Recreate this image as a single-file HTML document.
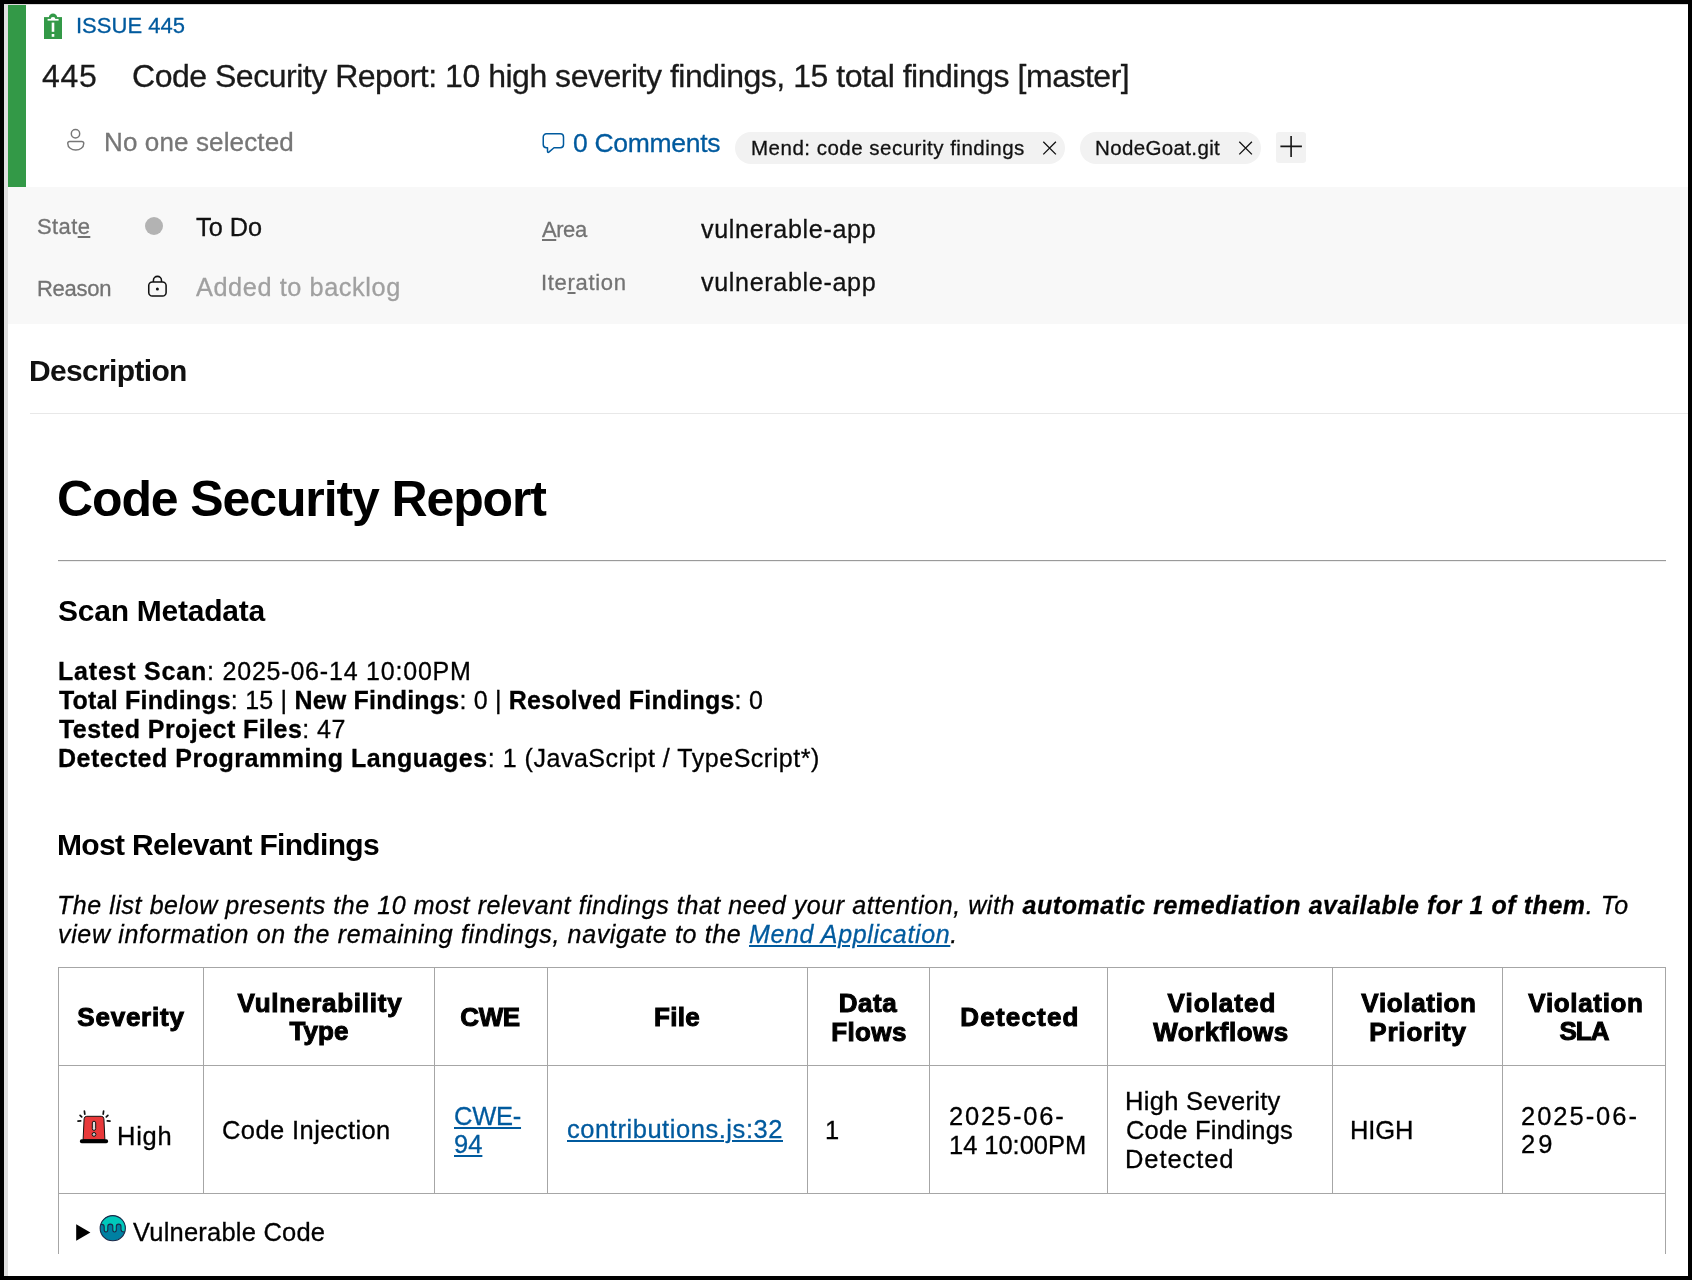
<!DOCTYPE html>
<html><head><meta charset="utf-8"><style>
html,body{margin:0;padding:0;}
body{width:1692px;height:1280px;position:relative;overflow:hidden;background:#fff;font-family:"Liberation Sans",sans-serif;}
.t{position:absolute;white-space:nowrap;will-change:transform;-webkit-text-stroke:0.3px currentColor;}
u{text-decoration-thickness:1.5px;text-underline-offset:2px;}
</style></head><body>
<div style="position:absolute;left:0px;top:0px;width:1692px;height:1280px;background:#000;"></div>
<div style="position:absolute;left:4px;top:4px;width:1684px;height:1272px;background:#fff;"></div>
<div style="position:absolute;left:4px;top:4px;width:4px;height:1272px;background:#e0e0e0;"></div>
<div style="position:absolute;left:4px;top:4px;width:1684px;height:1px;background:#dadada;"></div>
<div style="position:absolute;left:8px;top:5px;width:18px;height:182px;background:#339947;"></div>
<div style="position:absolute;left:8px;top:187px;width:1680px;height:137px;background:#f8f8f8;"></div>
<div style="position:absolute;left:30px;top:413px;width:1658px;height:1px;background:#e8e8e8;"></div>
<div style="position:absolute;left:58px;top:560px;width:1608px;height:1px;background:#9a9a9a;"></div>
<div style="position:absolute;left:58px;top:561px;width:1608px;height:1px;background:#efefef;"></div>
<svg style="position:absolute;left:44px;top:13px" width="18" height="27" viewBox="0 0 18 27">
<rect x="0" y="4.1" width="18" height="21.9" fill="#339947"/>
<circle cx="9" cy="4.7" r="4.2" fill="#339947"/>
<path d="M6.6 6.4 A2.4 2.4 0 0 1 11.4 6.4 Z" fill="#fff"/>
<rect x="3.6" y="5.9" width="11" height="1.7" fill="#fff"/>
<rect x="7.7" y="9.6" width="2.6" height="9.2" fill="#fff"/>
<rect x="7.7" y="21" width="2.6" height="2.8" fill="#fff"/>
</svg>
<div class="t" id="issue" style="left:75.84px;top:15.13px;font-size:22.00px;line-height:22.00px;font-weight:400;font-style:normal;color:#005a9e;letter-spacing:0.012px;">ISSUE 445</div>
<div class="t" id="num" style="left:41.64px;top:59.91px;font-size:32.00px;line-height:32.00px;font-weight:400;font-style:normal;color:#1a1a1a;letter-spacing:0.720px;">445</div>
<div class="t" id="title" style="left:132.46px;top:59.91px;font-size:32.00px;line-height:32.00px;font-weight:400;font-style:normal;color:#1a1a1a;letter-spacing:-0.482px;">Code Security Report: 10 high severity findings, 15 total findings [master]</div>
<svg style="position:absolute;left:62px;top:126px" width="28" height="30" viewBox="0 0 28 30">
<circle cx="13.5" cy="7.75" r="4.2" fill="none" stroke="#777" stroke-width="1.45"/>
<path d="M7.75 15.5 H19.75 Q21.75 15.5 21.75 17.5 C21.75 21.6 18 24 13.75 24 C9.5 24 5.75 21.6 5.75 17.5 Q5.75 15.5 7.75 15.5 Z" fill="none" stroke="#777" stroke-width="1.45"/>
</svg>
<div class="t" id="noone" style="left:104.20px;top:128.99px;font-size:26.00px;line-height:26.00px;font-weight:400;font-style:normal;color:#767676;letter-spacing:0.129px;">No one selected</div>
<svg style="position:absolute;left:540px;top:131px" width="27" height="25" viewBox="0 0 27 25">
<path d="M6.45 2.75 H20.3 A3.2 3.2 0 0 1 23.5 5.95 V13.55 A3.2 3.2 0 0 1 20.3 16.75 H14 L9.2 20.9 Q7.5 22.2 7.5 20.3 V16.75 H6.45 A3.2 3.2 0 0 1 3.25 13.55 V5.95 A3.2 3.2 0 0 1 6.45 2.75 Z" fill="none" stroke="#005a9e" stroke-width="1.5" stroke-linejoin="round"/>
</svg>
<div class="t" id="comments" style="left:573.42px;top:129.57px;font-size:26.50px;line-height:26.50px;font-weight:400;font-style:normal;color:#005a9e;letter-spacing:-0.300px;">0 Comments</div>
<div style="position:absolute;left:735px;top:132px;width:330px;height:32px;background:#f2f2f2;border-radius:16px"></div>
<div class="t" id="pill1" style="left:751.01px;top:137.65px;font-size:20.50px;line-height:20.50px;font-weight:400;font-style:normal;color:#111;letter-spacing:0.500px;">Mend: code security findings</div>
<svg style="position:absolute;left:1041px;top:141px" width="16" height="16" viewBox="0 0 16 16"><path d="M2.3 0.8 L14.9 13.4 M14.9 0.8 L2.3 13.4" stroke="#111" stroke-width="1.3"/></svg>
<div style="position:absolute;left:1080px;top:132px;width:181px;height:32px;background:#f2f2f2;border-radius:16px"></div>
<div class="t" id="pill2" style="left:1095.01px;top:137.65px;font-size:20.50px;line-height:20.50px;font-weight:400;font-style:normal;color:#111;letter-spacing:0.360px;">NodeGoat.git</div>
<svg style="position:absolute;left:1237px;top:141px" width="16" height="16" viewBox="0 0 16 16"><path d="M2.3 0.8 L14.9 13.4 M14.9 0.8 L2.3 13.4" stroke="#111" stroke-width="1.3"/></svg>
<div style="position:absolute;left:1276px;top:132px;width:30px;height:31px;background:#f2f2f2;border-radius:3px"></div>
<svg style="position:absolute;left:1279px;top:135px" width="24" height="24" viewBox="0 0 24 24"><path d="M1.4 11.4 H22.9 M12.1 0.9 V21.9" stroke="#161616" stroke-width="1.6"/></svg>
<div class="t" id="state" style="left:37.01px;top:216.38px;font-size:22.00px;line-height:22.00px;font-weight:400;font-style:normal;color:#737373;letter-spacing:0.385px;">Stat<u>e</u></div>
<div style="position:absolute;left:145px;top:217px;width:18px;height:18px;border-radius:50%;background:#b3b3b3"></div>
<div class="t" id="todo" style="left:195.55px;top:214.58px;font-size:25.30px;line-height:25.30px;font-weight:400;font-style:normal;color:#111;letter-spacing:0.000px;">To Do</div>
<div class="t" id="reason" style="left:37.10px;top:278.38px;font-size:22.00px;line-height:22.00px;font-weight:400;font-style:normal;color:#737373;letter-spacing:-0.270px;">Reason</div>
<svg style="position:absolute;left:146px;top:274px" width="23" height="24" viewBox="0 0 23 24">
<path d="M7.4 8 V6.4 A4.05 4.05 0 0 1 15.5 6.4 V8" fill="none" stroke="#111" stroke-width="1.55"/>
<rect x="2.75" y="8" width="17.35" height="14" rx="3.6" fill="none" stroke="#111" stroke-width="1.55"/>
<circle cx="11.4" cy="14.9" r="1.5" fill="#111"/>
</svg>
<div class="t" id="backlog" style="left:195.91px;top:274.98px;font-size:25.30px;line-height:25.30px;font-weight:400;font-style:normal;color:#a0a0a0;letter-spacing:0.580px;">Added to backlog</div>
<div class="t" id="area" style="left:541.64px;top:219.38px;font-size:22.00px;line-height:22.00px;font-weight:400;font-style:normal;color:#737373;letter-spacing:-0.450px;"><u>A</u>rea</div>
<div class="t" id="areav" style="left:700.75px;top:217.25px;font-size:25.10px;line-height:25.10px;font-weight:400;font-style:normal;color:#111;letter-spacing:0.664px;">vulnerable-app</div>
<div class="t" id="iter" style="left:541.11px;top:271.68px;font-size:22.00px;line-height:22.00px;font-weight:400;font-style:normal;color:#737373;letter-spacing:0.687px;">Ite<u>r</u>ation</div>
<div class="t" id="iterv" style="left:700.75px;top:270.45px;font-size:25.10px;line-height:25.10px;font-weight:400;font-style:normal;color:#111;letter-spacing:0.664px;">vulnerable-app</div>
<div class="t" id="desc" style="left:29.00px;top:355.61px;font-size:30.00px;line-height:30.00px;font-weight:700;font-style:normal;color:#111;letter-spacing:-0.666px;-webkit-text-stroke:0;">Description</div>
<div class="t" id="h1" style="left:57.20px;top:474.28px;font-size:50.00px;line-height:50.00px;font-weight:700;font-style:normal;color:#000;letter-spacing:-1.115px;-webkit-text-stroke:0;">Code Security Report</div>
<div class="t" id="h2a" style="left:57.74px;top:595.90px;font-size:30.00px;line-height:30.00px;font-weight:700;font-style:normal;color:#000;letter-spacing:-0.238px;-webkit-text-stroke:0;">Scan Metadata</div>
<div class="t" id="m1" style="left:58.14px;top:658.84px;font-size:25.00px;line-height:25.00px;font-weight:400;font-style:normal;color:#000;letter-spacing:0.792px;"><b>Latest Scan</b>: 2025-06-14 10:00PM</div>
<div class="t" id="m2" style="left:59.10px;top:687.84px;font-size:25.00px;line-height:25.00px;font-weight:400;font-style:normal;color:#000;letter-spacing:0.207px;"><b>Total Findings</b>: 15 | <b>New Findings</b>: 0 | <b>Resolved Findings</b>: 0</div>
<div class="t" id="m3" style="left:59.04px;top:716.84px;font-size:25.00px;line-height:25.00px;font-weight:400;font-style:normal;color:#000;letter-spacing:0.446px;"><b>Tested Project Files</b>: 47</div>
<div class="t" id="m4" style="left:58.14px;top:745.84px;font-size:25.00px;line-height:25.00px;font-weight:400;font-style:normal;color:#000;letter-spacing:0.525px;"><b>Detected Programming Languages</b>: 1 (JavaScript / TypeScript*)</div>
<div class="t" id="h2b" style="left:57.29px;top:829.81px;font-size:30.00px;line-height:30.00px;font-weight:700;font-style:normal;color:#000;letter-spacing:-0.667px;-webkit-text-stroke:0;">Most Relevant Findings</div>
<div class="t" id="p1" style="left:57.20px;top:892.94px;font-size:25.00px;line-height:25.00px;font-weight:400;font-style:italic;color:#000;letter-spacing:0.568px;">The list below presents the 10 most relevant findings that need your attention, with <b>automatic remediation available for 1 of them</b>. To</div>
<div class="t" id="p2" style="left:58.10px;top:921.84px;font-size:25.00px;line-height:25.00px;font-weight:400;font-style:italic;color:#000;letter-spacing:0.654px;">view information on the remaining findings, navigate to the <u style="color:#005a9e">Mend Application</u>.</div>
<div style="position:absolute;left:58px;top:967px;width:1px;height:287px;background:#a6a6a6;"></div>
<div style="position:absolute;left:203px;top:967px;width:1px;height:227px;background:#a6a6a6;"></div>
<div style="position:absolute;left:434px;top:967px;width:1px;height:227px;background:#a6a6a6;"></div>
<div style="position:absolute;left:547px;top:967px;width:1px;height:227px;background:#a6a6a6;"></div>
<div style="position:absolute;left:807px;top:967px;width:1px;height:227px;background:#a6a6a6;"></div>
<div style="position:absolute;left:929px;top:967px;width:1px;height:227px;background:#a6a6a6;"></div>
<div style="position:absolute;left:1107px;top:967px;width:1px;height:227px;background:#a6a6a6;"></div>
<div style="position:absolute;left:1332px;top:967px;width:1px;height:227px;background:#a6a6a6;"></div>
<div style="position:absolute;left:1502px;top:967px;width:1px;height:227px;background:#a6a6a6;"></div>
<div style="position:absolute;left:1665px;top:967px;width:1px;height:287px;background:#a6a6a6;"></div>
<div style="position:absolute;left:58px;top:967px;width:1608px;height:1px;background:#a6a6a6;"></div>
<div style="position:absolute;left:58px;top:1065px;width:1608px;height:1px;background:#a6a6a6;"></div>
<div style="position:absolute;left:58px;top:1193px;width:1608px;height:1px;background:#a6a6a6;"></div>
<div class="t" id="hsev" style="left:-168.64px;top:1003.99px;font-size:26.00px;line-height:26.00px;font-weight:700;font-style:normal;color:#000;letter-spacing:0.772px;width:600px;text-align:center;-webkit-text-stroke:1.0px #000;">Severity</div>
<div class="t" id="hvt1" style="left:19.54px;top:989.99px;font-size:26.00px;line-height:26.00px;font-weight:700;font-style:normal;color:#000;letter-spacing:0.750px;width:600px;text-align:center;-webkit-text-stroke:1.0px #000;">Vulnerability</div>
<div class="t" id="hvt2" style="left:19.00px;top:1018.49px;font-size:26.00px;line-height:26.00px;font-weight:700;font-style:normal;color:#000;letter-spacing:0.000px;width:600px;text-align:center;-webkit-text-stroke:1.0px #000;">Type</div>
<div class="t" id="hcwe" style="left:190.20px;top:1003.99px;font-size:26.00px;line-height:26.00px;font-weight:700;font-style:normal;color:#000;letter-spacing:-0.450px;width:600px;text-align:center;-webkit-text-stroke:1.0px #000;">CWE</div>
<div class="t" id="hfile" style="left:377.30px;top:1003.99px;font-size:26.00px;line-height:26.00px;font-weight:700;font-style:normal;color:#000;letter-spacing:0.267px;width:600px;text-align:center;-webkit-text-stroke:1.0px #000;">File</div>
<div class="t" id="hdf1" style="left:567.50px;top:989.99px;font-size:26.00px;line-height:26.00px;font-weight:700;font-style:normal;color:#000;letter-spacing:0.560px;width:600px;text-align:center;-webkit-text-stroke:1.0px #000;">Data</div>
<div class="t" id="hdf2" style="left:569.04px;top:1019.49px;font-size:26.00px;line-height:26.00px;font-weight:700;font-style:normal;color:#000;letter-spacing:0.360px;width:600px;text-align:center;-webkit-text-stroke:1.0px #000;">Flows</div>
<div class="t" id="hdet" style="left:720.30px;top:1003.99px;font-size:26.00px;line-height:26.00px;font-weight:700;font-style:normal;color:#000;letter-spacing:1.195px;width:600px;text-align:center;-webkit-text-stroke:1.0px #000;">Detected</div>
<div class="t" id="hvw1" style="left:921.80px;top:989.99px;font-size:26.00px;line-height:26.00px;font-weight:700;font-style:normal;color:#000;letter-spacing:1.014px;width:600px;text-align:center;-webkit-text-stroke:1.0px #000;">Violated</div>
<div class="t" id="hvw2" style="left:921.41px;top:1019.49px;font-size:26.00px;line-height:26.00px;font-weight:700;font-style:normal;color:#000;letter-spacing:0.513px;width:600px;text-align:center;-webkit-text-stroke:1.0px #000;">Workflows</div>
<div class="t" id="hvp1" style="left:1119.40px;top:989.99px;font-size:26.00px;line-height:26.00px;font-weight:700;font-style:normal;color:#000;letter-spacing:0.663px;width:600px;text-align:center;-webkit-text-stroke:1.0px #000;">Violation</div>
<div class="t" id="hvp2" style="left:1117.50px;top:1019.49px;font-size:26.00px;line-height:26.00px;font-weight:700;font-style:normal;color:#000;letter-spacing:0.793px;width:600px;text-align:center;-webkit-text-stroke:1.0px #000;">Priority</div>
<div class="t" id="hvs1" style="left:1285.66px;top:989.99px;font-size:26.00px;line-height:26.00px;font-weight:700;font-style:normal;color:#000;letter-spacing:0.664px;width:600px;text-align:center;-webkit-text-stroke:1.0px #000;">Violation</div>
<div class="t" id="hvs2" style="left:1283.91px;top:1018.49px;font-size:26.00px;line-height:26.00px;font-weight:700;font-style:normal;color:#000;letter-spacing:-0.990px;width:600px;text-align:center;-webkit-text-stroke:1.0px #000;">SLA</div>
<svg style="position:absolute;left:74px;top:1106px" width="40" height="40" viewBox="0 0 40 40">
<g stroke="#111" stroke-width="1.7" stroke-linecap="round">
<path d="M10.4 5 L10.8 8.2"/><path d="M29.6 5 L29.2 8.2"/>
<path d="M6.1 9.3 L7.7 10.8"/><path d="M33.9 9.3 L32.3 10.8"/>
<path d="M4 15.2 L6.7 14.8"/><path d="M36 15.2 L33.3 14.8"/>
</g>
<path d="M12.8 10.3 H27.2 Q29.7 10.3 29.9 12.8 L30.9 33.8 H9.1 L10.1 12.8 Q10.3 10.3 12.8 10.3 Z" fill="#e8393a" stroke="#111" stroke-width="1"/>
<rect x="5.9" y="33.2" width="28.2" height="4" rx="1.8" fill="#000"/>
<rect x="18.3" y="15.2" width="3.4" height="9.2" rx="1.7" fill="#ddd" stroke="#111" stroke-width="1"/>
<circle cx="20" cy="28.4" r="1.9" fill="#ccc" stroke="#111" stroke-width="1"/>
</svg>
<div class="t" id="high" style="left:117.20px;top:1124.41px;font-size:25.50px;line-height:25.50px;font-weight:400;font-style:normal;color:#000;letter-spacing:0.750px;">High</div>
<div class="t" id="ci" style="left:222.01px;top:1118.01px;font-size:25.50px;line-height:25.50px;font-weight:400;font-style:normal;color:#000;letter-spacing:0.406px;">Code Injection</div>
<div class="t" id="cwe1" style="left:453.64px;top:1103.51px;font-size:25.50px;line-height:25.50px;font-weight:400;font-style:normal;color:#005a9e;letter-spacing:-0.240px;"><u>CWE-</u></div>
<div class="t" id="cwe2" style="left:453.64px;top:1131.81px;font-size:25.50px;line-height:25.50px;font-weight:400;font-style:normal;color:#005a9e;letter-spacing:0.000px;"><u>94</u></div>
<div class="t" id="file" style="left:566.70px;top:1117.31px;font-size:25.50px;line-height:25.50px;font-weight:400;font-style:normal;color:#005a9e;letter-spacing:0.550px;"><u>contributions.js:32</u></div>
<div class="t" id="df" style="left:825.19px;top:1118.31px;font-size:25.50px;line-height:25.50px;font-weight:400;font-style:normal;color:#000;letter-spacing:0.000px;">1</div>
<div class="t" id="det1" style="left:949.01px;top:1103.71px;font-size:25.50px;line-height:25.50px;font-weight:400;font-style:normal;color:#000;letter-spacing:1.800px;">2025-06-</div>
<div class="t" id="det2" style="left:949.01px;top:1133.01px;font-size:25.50px;line-height:25.50px;font-weight:400;font-style:normal;color:#000;letter-spacing:-0.040px;">14 10:00PM</div>
<div class="t" id="vw1" style="left:1125.00px;top:1089.21px;font-size:25.50px;line-height:25.50px;font-weight:400;font-style:normal;color:#000;letter-spacing:0.309px;">High Severity</div>
<div class="t" id="vw2" style="left:1126.46px;top:1118.31px;font-size:25.50px;line-height:25.50px;font-weight:400;font-style:normal;color:#000;letter-spacing:0.195px;">Code Findings</div>
<div class="t" id="vw3" style="left:1125.00px;top:1147.11px;font-size:25.50px;line-height:25.50px;font-weight:400;font-style:normal;color:#000;letter-spacing:0.915px;">Detected</div>
<div class="t" id="vp" style="left:1350.29px;top:1118.41px;font-size:25.50px;line-height:25.50px;font-weight:400;font-style:normal;color:#000;letter-spacing:-0.100px;">HIGH</div>
<div class="t" id="sla1" style="left:1520.83px;top:1104.11px;font-size:25.50px;line-height:25.50px;font-weight:400;font-style:normal;color:#000;letter-spacing:1.980px;">2025-06-</div>
<div class="t" id="sla2" style="left:1520.83px;top:1132.21px;font-size:25.50px;line-height:25.50px;font-weight:400;font-style:normal;color:#000;letter-spacing:2.970px;">29</div>
<svg style="position:absolute;left:75px;top:1222px" width="18" height="20" viewBox="0 0 18 20"><path d="M1.2 2.2 L15.4 10.5 L1.2 18.8 Z" fill="#000"/></svg>
<svg style="position:absolute;left:95px;top:1210.5px" width="35" height="35" viewBox="0 0 35 35">
<defs><clipPath id="cc"><circle cx="17.75" cy="17.2" r="12.6"/></clipPath></defs>
<circle cx="17.75" cy="17.2" r="12.6" fill="#0080a2"/>
<path clip-path="url(#cc)" d="M0 0 H35 V21 H29.2 Q26 21 26 18.6 V15.4 Q26 13.1 23.65 13.1 Q21.3 13.1 21.3 15.4 V18.8 Q21.3 21 19.55 21 Q17.8 21 17.8 18.8 V15.4 Q17.8 13.1 15.3 13.1 Q12.8 13.1 12.8 15.4 V18.8 Q12.8 21 11 21 Q9.2 21 9.2 18.8 V15.9 Q9.2 13.4 6.8 13.4 H0 Z" fill="#00c8bb" stroke="#1c2848" stroke-width="1.1"/>
<circle cx="17.75" cy="17.2" r="12.6" fill="none" stroke="#1c2848" stroke-width="1.1"/>
</svg>
<div class="t" id="vc" style="left:133.10px;top:1220.21px;font-size:25.50px;line-height:25.50px;font-weight:400;font-style:normal;color:#000;letter-spacing:0.214px;">Vulnerable Code</div>
<div style="position:absolute;left:8px;top:1254px;width:1680px;height:22px;background:#fff;"></div>
</body></html>
